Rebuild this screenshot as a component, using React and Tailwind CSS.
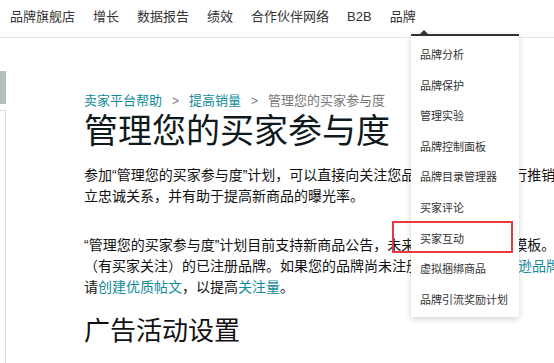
import React from "react";

/* ─── Data ───────────────────────────────────────────────────── */

const NAV_ITEMS = ["品牌旗舰店", "增长", "数据报告", "绩效", "合作伙伴网络", "B2B", "品牌"];

const BRAND_MENU = [
  "品牌分析",
  "品牌保护",
  "管理实验",
  "品牌控制面板",
  "品牌目录管理器",
  "买家评论",
  "买家互动",
  "虚拟捆绑商品",
  "品牌引流奖励计划",
];

const FONT = "font-['Liberation_Sans','Noto_Sans_CJK_SC',sans-serif]";

/* ─── Components ─────────────────────────────────────────────── */

function TopNav() {
  return (
    <div className="h-[38px] flex items-center gap-[18px] pl-[10px] pb-[4px] border-b border-[#e4e4e4] text-[13px] text-[#333]">
      {NAV_ITEMS.map((item) => (
        <span key={item} className="whitespace-nowrap">{item}</span>
      ))}
    </div>
  );
}

function BrandDropdown() {
  return (
    <div className="absolute left-[411px] top-[34px] w-[108px] bg-white border-t-2 border-[#333] shadow-[0_2px_6px_rgba(0,0,0,0.18)] pt-[4px] pb-[2px]">
      {/* caret */}
      <div className="absolute -top-[6px] left-[9px] w-0 h-0 border-x-[4px] border-x-transparent border-b-[4px] border-b-[#333]" />
      {BRAND_MENU.map((item) => (
        <div key={item} className="h-[30.6px] flex items-center pl-[9px] text-[11px] text-[#333] whitespace-nowrap">
          {item}
        </div>
      ))}
      {/* highlight annotation */}
      <div className="absolute left-[-19px] top-[185px] w-[121px] h-[32px] border-2 border-[#e8393c]" />
    </div>
  );
}

function Link({ children }) {
  return <span className="text-[#138b9b]">{children}</span>;
}

export default function App() {
  return (
    <div className={`relative w-[554px] h-[363px] overflow-hidden bg-white ${FONT}`}>
      <TopNav />

      <div className="flex">
        {/* Left rail */}
        <div className="w-[6px] shrink-0 pt-[33px]">
          <div className="h-[33px] bg-[#b3bfbf]" />
          <div className="mt-[6px] h-[260px] border-t border-r border-[#dcdcdc]" />
        </div>

        {/* Main */}
        <div className="pl-[78px] pt-[53px] text-[#111] whitespace-nowrap">
          <div className="flex items-center text-[13px] leading-[20px]">
            <Link>卖家平台帮助</Link>
            <span className="mx-[10px] text-[#767676] text-[12px]">&gt;</span>
            <Link>提高销量</Link>
            <span className="mx-[10px] text-[#767676] text-[12px]">&gt;</span>
            <span className="text-[#767676]">管理您的买家参与度</span>
          </div>

          <h1 className="text-[34px] leading-[40px] text-[#0f1a1c]">管理您的买家参与度</h1>

          <p className="mt-[14px] text-[14px] leading-[21px]">
            参加“管理您的买家参与度”计划，可以直接向关注您品牌的所有买家进行推销，与他们建
            <br />
            立忠诚关系，并有助于提高新商品的曝光率。
          </p>

          <p className="mt-[28px] text-[14px] leading-[21px]">
            “管理您的买家参与度”计划目前支持新商品公告，未来将支持更多帖子模板。<Link>了解</Link>
            <br />
            （有买家关注）的已注册品牌。如果您的品牌尚未注册，请先通过<Link>亚马逊品牌注册</Link>
            <br />
            请<Link>创建优质帖文</Link>，以提高<Link>关注量</Link>。
          </p>

          <h2 className="mt-[16px] text-[26px] leading-[34px] text-[#111]">广告活动设置</h2>
        </div>
      </div>

      <BrandDropdown />
    </div>
  );
}
